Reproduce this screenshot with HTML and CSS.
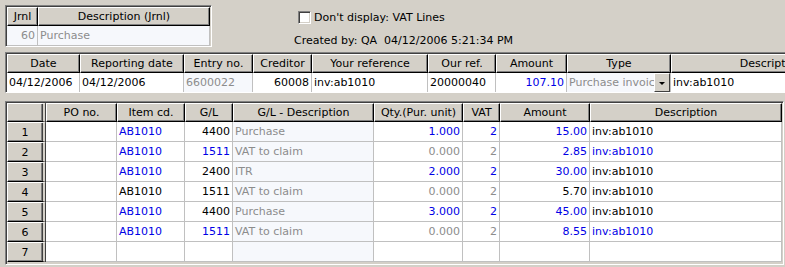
FILE: index.html
```html
<!DOCTYPE html>
<html lang="en">

<head>
    <meta charset="UTF-8">
    <title>Purchase entry</title>
    <link rel="stylesheet" href="styles.css">
</head>

<body>
    <div class="top">
        <!-- Journal -->
        <div class="frame journal">
            <table class="grid">
                <tr>
                    <th class="w-jrnl">Jrnl</th>
                    <th class="w-jdesc">Description (Jrnl)</th>
                </tr>
                <tr>
                    <td class="num grey light">60</td>
                    <td class="grey light">Purchase</td>
                </tr>
            </table>
        </div>
        <div class="info">
            <label class="check-line"><span class="checkbox"></span>Don't display: VAT Lines</label>
            <div class="created">Created by: QA&nbsp; 04/12/2006 5:21:34 PM</div>
        </div>
    </div>

    <!-- Entry header -->
    <div class="frame entry">
        <table class="grid">
            <tr>
                <th class="w-date">Date</th>
                <th class="w-rdate">Reporting date</th>
                <th class="w-entry">Entry no.</th>
                <th class="w-cred">Creditor</th>
                <th class="w-yref">Your reference</th>
                <th class="w-oref">Our ref.</th>
                <th class="w-amt">Amount</th>
                <th class="w-type">Type</th>
                <th class="w-edesc">Description</th>
            </tr>
            <tr class="tall">
                <td>04/12/2006</td>
                <td>04/12/2006</td>
                <td class="grey light">6600022</td>
                <td class="num">60008</td>
                <td>inv:ab1010</td>
                <td>20000040</td>
                <td class="num blue">107.10</td>
                <td class="grey light combo"><span class="combo-text">Purchase invoice</span><span class="drop"></span></td>
                <td>inv:ab1010</td>
            </tr>
        </table>
    </div>

    <!-- Lines -->
    <div class="frame lines">
        <table class="grid">
            <tr>
                <th class="w-rh rowhead"></th>
                <th class="w-po">PO no.</th>
                <th class="w-item">Item cd.</th>
                <th class="w-gl">G/L</th>
                <th class="w-gldesc">G/L - Description</th>
                <th class="w-qty">Qty.(Pur. unit)</th>
                <th class="w-vat">VAT</th>
                <th class="w-lamt">Amount</th>
                <th class="w-ldesc">Description</th>
            </tr>
            <tr>
                <th class="rowhead">1</th>
                <td></td>
                <td class="blue">AB1010</td>
                <td class="num">4400</td>
                <td class="grey light">Purchase</td>
                <td class="num blue">1.000</td>
                <td class="num blue">2</td>
                <td class="num blue">15.00</td>
                <td>inv:ab1010</td>
            </tr>
            <tr>
                <th class="rowhead">2</th>
                <td></td>
                <td class="blue">AB1010</td>
                <td class="num blue">1511</td>
                <td class="grey light">VAT to claim</td>
                <td class="num grey">0.000</td>
                <td class="num grey">2</td>
                <td class="num blue">2.85</td>
                <td class="blue">inv:ab1010</td>
            </tr>
            <tr>
                <th class="rowhead">3</th>
                <td></td>
                <td class="blue">AB1010</td>
                <td class="num">2400</td>
                <td class="grey light">ITR</td>
                <td class="num blue">2.000</td>
                <td class="num blue">2</td>
                <td class="num blue">30.00</td>
                <td>inv:ab1010</td>
            </tr>
            <tr>
                <th class="rowhead">4</th>
                <td></td>
                <td>AB1010</td>
                <td class="num">1511</td>
                <td class="grey light">VAT to claim</td>
                <td class="num grey">0.000</td>
                <td class="num grey">2</td>
                <td class="num">5.70</td>
                <td>inv:ab1010</td>
            </tr>
            <tr>
                <th class="rowhead">5</th>
                <td></td>
                <td class="blue">AB1010</td>
                <td class="num">4400</td>
                <td class="grey light">Purchase</td>
                <td class="num blue">3.000</td>
                <td class="num blue">2</td>
                <td class="num blue">45.00</td>
                <td>inv:ab1010</td>
            </tr>
            <tr>
                <th class="rowhead">6</th>
                <td></td>
                <td class="blue">AB1010</td>
                <td class="num blue">1511</td>
                <td class="grey light">VAT to claim</td>
                <td class="num grey">0.000</td>
                <td class="num grey">2</td>
                <td class="num blue">8.55</td>
                <td class="blue">inv:ab1010</td>
            </tr>
            <tr>
                <th class="rowhead">7</th>
                <td></td>
                <td></td>
                <td></td>
                <td class="light"></td>
                <td></td>
                <td></td>
                <td></td>
                <td></td>
            </tr>
        </table>
    </div>
</body>

</html>
```

FILE: styles.css
```css
* {
    margin: 0;
    padding: 0;
    box-sizing: border-box;
}

body {
    background-color: #d4d0c8;
    color: #000;
    font-family: "DejaVu Sans", Tahoma, sans-serif;
    font-size: 11px;
    width: 785px;
    height: 267px;
    overflow: hidden;
    padding: 5px 0 0 5px;
}

.top {
    display: flex;
    height: 47px;
}

/* sunken frame around each grid */
.frame {
    border-top: 1px solid #808080;
    border-left: 1px solid #808080;
    border-right: 1px solid #fff;
    border-bottom: 1px solid #fff;
    box-shadow: inset 1px 1px 0 #404040;
    padding: 1px 0 0 1px;
    background-color: #d4d0c8;
    overflow: hidden;
}

.journal {
    width: 207px;
    height: 42px;
}

.journal .grid {
    width: 203px;
}

.info {
    padding: 5px 0 0 82px;
}

.check-line {
    display: flex;
    align-items: center;
    height: 14px;
    margin-left: 4px;
}

.checkbox {
    width: 13px;
    height: 13px;
    background-color: #fff;
    border-top: 1px solid #808080;
    border-left: 1px solid #808080;
    border-right: 1px solid #fff;
    border-bottom: 1px solid #fff;
    box-shadow: inset 1px 1px 0 #404040, inset -1px -1px 0 #d4d0c8;
    margin-right: 3px;
}

.created {
    margin-top: 10px;
}

.entry {
    width: 870px;
    height: 41px;
}

.entry .grid {
    width: 864px;
}

.lines {
    margin-top: 8px;
    width: 779px;
    height: 164px;
}

.lines .grid {
    width: 775px;
}

/* grid tables */
.grid {
    border-collapse: separate;
    border-spacing: 0;
    table-layout: fixed;
    white-space: nowrap;
}

.grid th,
.grid td {
    overflow: hidden;
    height: 20px;
    padding: 0 2px;
    font-weight: normal;
}

.grid th {
    height: 19px;
    text-align: center;
    background-color: #d4d0c8;
    border-top: 1px solid #fff;
    border-left: 1px solid #fff;
    border-right: 1px solid #000;
    border-bottom: 1px solid #000;
    box-shadow: inset -1px -1px 0 #808080;
}

.grid td {
    background-color: #fff;
    border-right: 1px solid #c0c0c0;
    border-bottom: 1px solid #c0c0c0;
}

.entry .grid td {
    height: 19px;
    border-bottom: none;
}

.grid .rowhead {
    border-right: 4px double #404040;
    box-shadow: inset -1px -1px 0 #808080;
}

.num {
    text-align: right;
}

.grid .light {
    background-color: #f6f8fc;
}

.grey {
    color: #8c8c8c;
}

.blue {
    color: #0000e6;
}

/* combo box in Type cell */
.combo {
    position: relative;
}

.combo-text {
    display: block;
    width: 85px;
    overflow: hidden;
}

.drop {
    position: absolute;
    right: 0;
    top: 0;
    width: 16px;
    height: 19px;
    background-color: #d4d0c8;
    border-top: 1px solid #fff;
    border-left: 1px solid #fff;
    border-right: 1px solid #404040;
    border-bottom: 1px solid #404040;
}

.drop::after {
    content: "";
    position: absolute;
    left: 4px;
    top: 8px;
    border-left: 3px solid transparent;
    border-right: 3px solid transparent;
    border-top: 3px solid #000;
}

/* column widths */
.w-jrnl { width: 31px; }
.w-jdesc { width: 172px; }

.w-date { width: 73px; }
.w-rdate { width: 104px; }
.w-entry { width: 69px; }
.w-cred { width: 59px; }
.w-yref { width: 116px; }
.w-oref { width: 68px; }
.w-amt { width: 71px; }
.w-type { width: 104px; }
.w-edesc { width: 200px; }

.w-rh { width: 39px; }
.w-po { width: 71px; }
.w-item { width: 68px; }
.w-gl { width: 48px; }
.w-gldesc { width: 141px; }
.w-qty { width: 89px; }
.w-vat { width: 37px; }
.w-lamt { width: 90px; }
.w-ldesc { width: 192px; }
```
